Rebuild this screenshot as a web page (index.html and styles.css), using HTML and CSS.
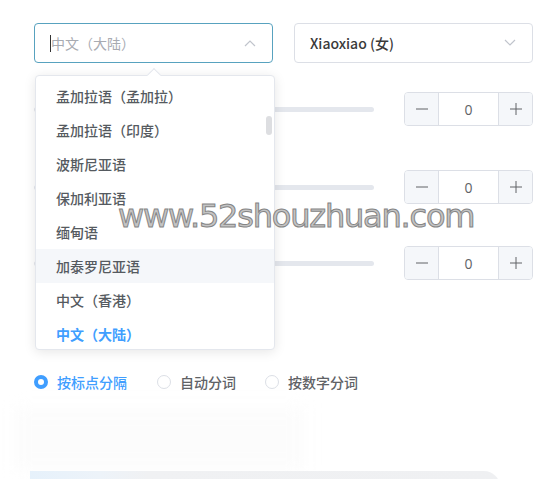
FILE: index.html
```html
<!DOCTYPE html>
<html lang="zh">
<head>
<meta charset="utf-8">
<link rel="stylesheet" href="styles.css">
</head>
<body>
<div class="page">
  <div class="selects">
    <div class="select focus">
      <span class="placeholder"><span class="caret"></span>中文（大陆）</span>
      <svg class="arrow" width="12" height="8" viewBox="0 0 12 8"><path d="M1 7 L6 2 L11 7" fill="none" stroke="#c0c4cc" stroke-width="1.2"/></svg>
    </div>
    <div class="select">
      <span class="value">Xiaoxiao (女)</span>
      <svg class="arrow" width="12" height="8" viewBox="0 0 12 8"><path d="M1 1 L6 6 L11 1" fill="none" stroke="#c0c4cc" stroke-width="1.2"/></svg>
    </div>
  </div>

  <div class="settings">
    <div class="row r1">
      <div class="slider"><div class="track"></div></div>
      <div class="num">
        <span class="btn minus"><svg width="14" height="14" viewBox="0 0 14 14"><path d="M1 7 H13" stroke="#606266" stroke-width="1"/></svg></span>
        <span class="val">0</span>
        <span class="btn plus"><svg width="14" height="14" viewBox="0 0 14 14"><path d="M1 7 H13 M7 1 V13" stroke="#606266" stroke-width="1"/></svg></span>
      </div>
    </div>
    <div class="row r2">
      <div class="slider"><div class="track"></div></div>
      <div class="num">
        <span class="btn minus"><svg width="14" height="14" viewBox="0 0 14 14"><path d="M1 7 H13" stroke="#606266" stroke-width="1"/></svg></span>
        <span class="val">0</span>
        <span class="btn plus"><svg width="14" height="14" viewBox="0 0 14 14"><path d="M1 7 H13 M7 1 V13" stroke="#606266" stroke-width="1"/></svg></span>
      </div>
    </div>
    <div class="row r3">
      <div class="slider"><div class="track"></div></div>
      <div class="num">
        <span class="btn minus"><svg width="14" height="14" viewBox="0 0 14 14"><path d="M1 7 H13" stroke="#606266" stroke-width="1"/></svg></span>
        <span class="val">0</span>
        <span class="btn plus"><svg width="14" height="14" viewBox="0 0 14 14"><path d="M1 7 H13 M7 1 V13" stroke="#606266" stroke-width="1"/></svg></span>
      </div>
    </div>
  </div>

  <div class="radios">
    <label class="radio checked"><span class="dot"></span>按标点分隔</label>
    <label class="radio"><span class="dot"></span>自动分词</label>
    <label class="radio"><span class="dot"></span>按数字分词</label>
  </div>

  <div class="bottom-area"></div>
  <div class="bottom-card"></div>

  <div class="dropdown">
    <div class="pop-arrow"></div>
    <ul class="list">
      <li>孟加拉语（孟加拉）</li>
      <li>孟加拉语（印度）</li>
      <li>波斯尼亚语</li>
      <li>保加利亚语</li>
      <li>缅甸语</li>
      <li class="hover">加泰罗尼亚语</li>
      <li>中文（香港）</li>
      <li class="selected">中文（大陆）</li>
    </ul>
    <div class="scroll-thumb"></div>
  </div>

  <div class="watermark">www.52shouzhuan.com</div>
</div>
</body>
</html>
```

FILE: styles.css
```css
* { box-sizing: border-box; }
html, body { margin: 0; padding: 0; background: #fff; }
body {
  font-family: "Noto Sans CJK SC", "Noto Sans", sans-serif;
  width: 552px;
  height: 479px;
  overflow: hidden;
}
.page {
  position: relative;
  width: 552px;
  height: 479px;
  padding: 23px 19px 0 34px;
  overflow: hidden;
}
.selects {
  display: flex;
  gap: 21px;
}
.select {
  width: 239px;
  height: 40px;
  border: 1px solid #dcdfe6;
  border-radius: 4px;
  display: flex;
  align-items: center;
  justify-content: space-between;
  padding: 0 16px 0 15px;
  font-size: 14px;
}
.select.focus { border-color: #58a2bf; }
.placeholder { color: #a8abb2; display: flex; align-items: center; }
.caret { display: inline-block; width: 1px; height: 17px; background: #333; }
.value { color: #3a3a3a; font-weight: 500; }
.settings {
  display: flex;
  flex-direction: column;
  margin-top: 29px;
}
.row {
  display: flex;
  align-items: center;
  justify-content: space-between;
  height: 34px;
}
.r2 { margin-top: 44px; }
.r3 { margin-top: 42px; }
.slider { width: 340px; display: flex; align-items: center; }
.track { width: 100%; height: 5px; background: #e4e7ed; border-radius: 3px; }
.num {
  width: 129px;
  height: 34px;
  border: 1px solid #dcdfe6;
  border-radius: 4px;
  display: flex;
  overflow: hidden;
  font-family: "Open Sans", "Noto Sans", sans-serif;
}
.btn {
  width: 34px;
  background: #f5f7fa;
  display: flex;
  align-items: center;
  justify-content: center;
}
.btn.minus { border-right: 1px solid #dcdfe6; }
.btn.plus { border-left: 1px solid #dcdfe6; }
.val {
  flex: 1;
  display: flex;
  align-items: center;
  justify-content: center;
  color: #606266;
  font-size: 14px;
}
.radios {
  display: flex;
  align-items: center;
  margin-top: 92px;
}
.radio {
  display: flex;
  align-items: center;
  font-size: 14px;
  color: #606266;
  font-weight: 500;
  margin-right: 30px;
}
.radio:nth-child(2) { margin-right: 29px; }
.dot {
  width: 14px;
  height: 14px;
  border: 1px solid #dcdfe6;
  border-radius: 50%;
  margin-right: 9px;
  background: #fff;
}
.radio.checked { color: #409eff; }
.radio.checked .dot { border: 4px solid #409eff; }
.bottom-area {
  position: absolute;
  left: 14px;
  top: 408px;
  width: 290px;
  height: 62px;
  background: #fcfcfc;
  filter: blur(8px);
}
.bottom-card {
  position: absolute;
  left: 30px;
  top: 471px;
  width: 470px;
  height: 20px;
  border-radius: 0 16px 0 0;
  background: linear-gradient(90deg, #e6f1fb 0%, #edf3f9 15%, #f0f1f3 25%, #eff0f2 100%);
}
.dropdown {
  position: absolute;
  left: 35px;
  top: 75px;
  width: 240px;
  height: 275px;
  background: #fff;
  border: 1px solid #e4e7ed;
  border-radius: 4px;
  box-shadow: 0 2px 12px rgba(0,0,0,0.1);
}
.pop-arrow {
  position: absolute;
  left: 113px;
  top: -6px;
  width: 10px;
  height: 10px;
  background: #fff;
  border-left: 1px solid #e4e7ed;
  border-top: 1px solid #e4e7ed;
  transform: rotate(45deg);
}
.list {
  list-style: none;
  margin: 0;
  padding: 3px 0 0;
  overflow: hidden;
  height: 273px;
}
.list li {
  height: 34px;
  line-height: 34px;
  padding-left: 20px;
  font-size: 14px;
  color: #555a60;
  font-weight: 500;
}
.list li.hover { background: #f5f7fa; }
.list li.selected { color: #409eff; font-weight: 700; }
.scroll-thumb {
  position: absolute;
  right: 2px;
  top: 40px;
  width: 6px;
  height: 19px;
  border-radius: 3px;
  background: #dddee1;
}
.watermark {
  position: absolute;
  left: 118px;
  top: 199px;
  font-family: "DejaVu Sans", sans-serif;
  font-size: 32px;
  letter-spacing: -1.2px;
  color: #c4c4c4;
  -webkit-text-stroke: 1px #858585;
  line-height: 34px;
  white-space: nowrap;
}
```
